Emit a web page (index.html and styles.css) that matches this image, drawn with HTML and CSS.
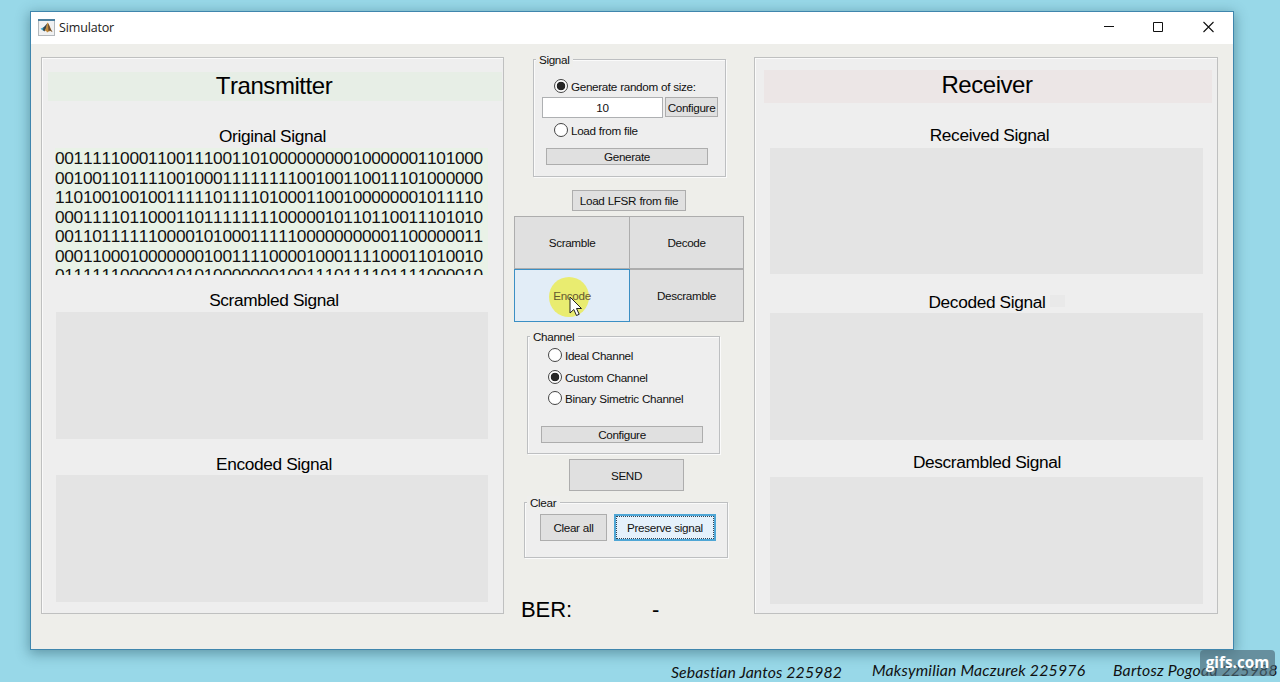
FILE: index.html
```html
<!DOCTYPE html>
<html lang="en">
<head>
<meta charset="utf-8">
<title>Simulator</title>
<link rel="stylesheet" href="styles.css">
</head>
<body>
<div class="window">
  <header class="titlebar">
    <svg class="app-icon" width="17" height="17" viewBox="0 0 17 17">
      <rect x=".5" y=".5" width="16" height="16" fill="#f0f1f2" stroke="#b3b8bc"/>
      <path d="M0 1h17" stroke="#4d7f9d" stroke-width="2"/>
      <path d="M2.500 9.700 6 8 8 9 5.500 12z" fill="#39a0c4"/>
      <path d="M5.500 8.500 9.500 4 8.500 9 6.500 12.500 5 11z" fill="#35434d"/>
      <path d="M9.500 3.500C11 4 12 9 14.500 13 12 11 11 12.500 9 13.500 8.500 11.500 7.500 11.500 6.500 12 8.500 9 8.500 5 9.500 3.500z" fill="#c08a3c"/>
      <path d="M10 4.500C11.500 6 12 10 14.500 13 12.500 11.500 11.500 11 10.500 12z" fill="#684b32"/>
    </svg>
    <span class="title">Simulator</span>
    <svg class="controls" width="112" height="14" viewBox="0 0 112 14" fill="none" stroke="#111">
      <path d="M0 5.500h10"/>
      <path d="M49.500 1.500h9v9h-9z"/>
      <path d="M99.500 1l10 10M109.500 1l-10 10" stroke-width="1.100"/>
    </svg>
  </header>
  <main class="content">
    <section class="panel transmitter">
      <h1 class="heading">Transmitter</h1>
      <h2 class="label original">Original Signal</h2>
      <div class="signal bits">
        <div>0011111000110011100110100000000010000001101000</div>
        <div>0010011011110010001111111100100110011101000000</div>
        <div>1101001001001111101111010001100100000001011110</div>
        <div>0001111011000110111111110000010110110011101010</div>
        <div>0011011111100001010001111100000000001100000011</div>
        <div>0001100010000000100111100001000111100011010010</div>
        <div>0111111000001010100000001001110111101111000010</div>
      </div>
      <h2 class="label scrambled">Scrambled Signal</h2>
      <div class="signal"></div>
      <h2 class="label encoded">Encoded Signal</h2>
      <div class="signal"></div>
    </section>

    <section class="middle">
      <div class="group source">
        <span class="legend">Signal</span>
        <div class="radio"><i class="dot on"></i>Generate random of size:</div>
        <div class="size-row"><div class="field">10</div><div class="btn small">Configure</div></div>
        <div class="radio"><i class="dot"></i>Load from file</div>
        <div class="btn generate">Generate</div>
      </div>
      <div class="btn lfsr">Load LFSR from file</div>
      <div class="actions">
        <div class="btn">Scramble</div>
        <div class="btn">Decode</div>
        <div class="btn hover"><i class="halo"></i><span class="caption">Encode</span>
          <svg class="cursor" width="13" height="21" viewBox="0 0 13 21"><path d="M1 1v16l3.800-3.500 2.700 6 2.700-1.200-2.700-5.800h5z" fill="#fff" stroke="#222"/></svg>
        </div>
        <div class="btn">Descramble</div>
      </div>
      <div class="group channel">
        <span class="legend">Channel</span>
        <div class="radio"><i class="dot"></i>Ideal Channel</div>
        <div class="radio"><i class="dot on"></i>Custom Channel</div>
        <div class="radio"><i class="dot"></i>Binary Simetric Channel</div>
        <div class="btn configure">Configure</div>
      </div>
      <div class="btn send">SEND</div>
      <div class="group clear">
        <span class="legend">Clear</span>
        <div class="btn clear-all">Clear all</div>
        <div class="btn preserve">Preserve signal</div>
      </div>
      <div class="ber"><span class="ber-name">BER:</span><span class="ber-value">-</span></div>
    </section>

    <section class="panel receiver">
      <h1 class="heading">Receiver</h1>
      <h2 class="label received">Received Signal</h2>
      <div class="signal"></div>
      <h2 class="label decoded">Decoded Signal<i class="patch"></i></h2>
      <div class="signal"></div>
      <h2 class="label descrambled">Descrambled Signal</h2>
      <div class="signal"></div>
    </section>
  </main>
</div>
<footer class="credits">
  <span class="first">Sebastian Jantos 225982</span>
  <span class="second">Maksymilian Maczurek 225976</span>
  <span class="third">Bartosz Pogoda 225988</span>
</footer>
<div class="watermark">gifs.com</div>
</body>
</html>
```
FILE: styles.css
```css
* { box-sizing: border-box; }
body {
  margin: 0;
  width: 1280px;
  height: 682px;
  overflow: hidden;
  position: relative;
  padding: 11px 0 0 30px;
  background: #98d8e8;
  color: #111;
  font-family: "Liberation Sans", Arial, sans-serif;
  font-kerning: none;
}
.window {
  width: 1204px;
  height: 639px;
  border: 1px solid #3f86ad;
  background: #eeeeea;
  box-shadow: 0 3px 12px 1px rgba(30, 75, 90, .45);
}
.titlebar {
  height: 32px;
  display: flex;
  align-items: center;
  padding: 0 0 1px 7px;
  background: #fff;
}
.title {
  margin-left: 4px;
  font: 12.500px "Open Sans", sans-serif;
  letter-spacing: -.15px;
  color: #222;
}
.controls { margin: 0 17px 0 auto; }
.content {
  display: grid;
  grid-template-columns: 463px 250px 464px;
  padding: 13px 0 0 10px;
}
.panel {
  height: 557px;
  border: 1px solid #bfc0c0;
  background: #eee;
  box-shadow: inset 1px 1px #fafafa;
}
.heading, .label {
  margin: 0;
  font-weight: normal;
  text-align: center;
  color: #000;
}
.heading { font-size: 24px; letter-spacing: -.45px; }
.label { font-size: 17.300px; letter-spacing: -.36px; height: 24px; line-height: 24px; }
.signal { height: 127px; background: #e4e4e4; }

.transmitter { padding: 14px 15px 0 14px; }
.transmitter .heading {
  height: 29px;
  line-height: 28px;
  margin: 0 -14px 0 -8px;
  padding-right: 2px;
  background: #e7eee6;
}
.original { margin-top: 23px; padding-left: 1px; }
.scrambled { margin-top: 13px; padding-left: 4px; }
.encoded { margin-top: 13px; padding-left: 4px; height: 23px; }
.bits {
  overflow: hidden;
  background: #e9f2e7;
  font-size: 17.300px;
  line-height: 19.500px;
  letter-spacing: -.31px;
  white-space: nowrap;
  color: #111;
  margin-left: -1px;
  padding-top: 1px;
}

.receiver { padding: 12px 14px 0 15px; }
.receiver .heading {
  height: 33px;
  line-height: 30px;
  margin: 0 -9px 0 -6px;
  padding-right: 2px;
  background: #ece6e6;
}
.receiver .label { padding-left: 6px; }
.received { margin-top: 20px; }
.receiver .received { height: 25px; }
.receiver .received + .signal { height: 126px; }
.decoded { margin-top: 16px; }
.receiver .decoded { height: 23px; padding-left: 1px; }
.descrambled { margin-top: 10px; }
.receiver .descrambled { height: 27px; padding-left: 1px; }
.patch {
  display: inline-block;
  width: 15px;
  height: 12px;
  margin: 0 -20px 0 5px;
  vertical-align: 1px;
  background: #e9e9e9;
}

.middle { font-size: 11.700px; letter-spacing: -.34px; word-spacing: .3px; }
.group {
  position: relative;
  border: 1px solid #bdbfc1;
  background: #eee;
  box-shadow: inset 1px 1px #fafafa, 1px 1px #fafafa;
}
.legend {
  position: absolute;
  top: -7px;
  left: 2px;
  padding: 0 4px 0 3px;
  line-height: 14px;
  background: #eeeeec;
}
.btn {
  display: flex;
  align-items: center;
  justify-content: center;
  border: 1px solid #adadad;
  background: #e0e0e0;
  white-space: nowrap;
}
.radio { display: flex; align-items: center; height: 14px; }
.dot {
  width: 14px;
  height: 14px;
  margin-right: 3px;
  border: 1px solid #444;
  border-radius: 50%;
  background: #fff;
}
.on { background: radial-gradient(circle, #252525 4px, #fff 4.600px); }

.source { width: 193px; height: 118px; margin: 2px 0 0 29px; padding: 19px 0 0 8px; }
.source .radio { padding-left: 12px; }
.size-row { display: flex; gap: 2px; margin: 4px 0 5px; }
.field {
  width: 121px;
  height: 21px;
  line-height: 20px;
  border: 1px solid #aeb0b2;
  background: #fff;
  text-align: center;
}
.small { width: 53px; height: 20px; }
.generate { width: 162px; height: 17px; margin: 11px 0 0 4px; }
.lfsr { width: 114px; height: 21px; margin: 13px 0 0 68px; }
.actions {
  display: grid;
  grid-template-columns: 116px 114px;
  grid-template-rows: 53px 53px;
  margin: 5px 0 0 10px;
}
.actions .btn { margin-left: -1px; }
.actions .btn:nth-child(odd) { margin-left: 0; }
.actions .hover { position: relative; z-index: 1; border-color: #3b8fc4; background: #e2edf7; color: #66592f; }
.halo {
  position: absolute;
  left: 34px;
  top: 7px;
  width: 40px;
  height: 40px;
  border-radius: 50%;
  background: #e9ec70;
}
.caption { position: relative; }
.cursor { position: absolute; left: 54px; top: 26px; }
.channel { width: 193px; height: 118px; margin: 14px 0 0 23px; padding: 11px 0 0 13px; }
.channel .radio { padding-left: 7px; margin-bottom: 8px; }
.channel .radio + .radio { margin-bottom: 7px; }
.channel .radio + .radio + .radio { margin-bottom: 0; }
.configure { width: 162px; height: 17px; margin-top: 21px; }
.send { width: 115px; height: 32px; margin: 5px 0 0 65px; }
.clear {
  display: flex;
  gap: 7px;
  width: 204px;
  height: 56px;
  margin: 11px 0 0 20px;
  padding: 11px 0 0 15px;
}
.clear-all { width: 67px; height: 27px; }
.preserve {
  width: 102px;
  height: 27px;
  border: 2px solid #4fa6d5;
  outline: 1px dotted #345;
  outline-offset: -3px;
  background: #e5f1fb;
}
.ber { display: flex; margin: 39px 0 0 17px; font-size: 22px; line-height: 26px; letter-spacing: -.1px; color: #000; }
.ber-name { width: 131px; }

.credits { font: italic 15.800px Lato, sans-serif; letter-spacing: .2px; color: #111; white-space: nowrap; }
.credits span { position: absolute; }
.first { left: 671px; top: 662px; letter-spacing: .12px; }
.second { left: 872px; top: 660px; }
.third { left: 1113px; top: 660px; }
.watermark {
  position: absolute;
  left: 1200px;
  top: 650px;
  width: 75px;
  height: 26px;
  border-radius: 4px;
  background: rgba(75, 105, 118, .65);
  color: #fff;
  font: bold 15.300px/25px "Open Sans", sans-serif;
  text-align: center;
}
```
